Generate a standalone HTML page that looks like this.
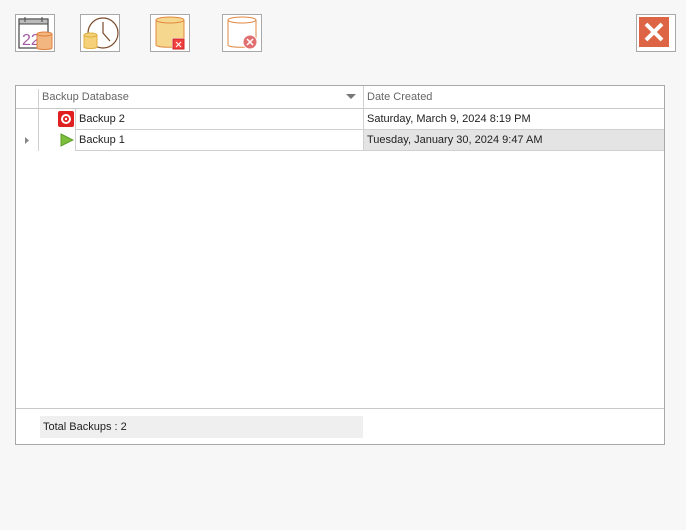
<!DOCTYPE html><html><head><style>
body{margin:0;width:686px;height:530px;background:#f7f7f7;font-family:"Liberation Sans",sans-serif;font-size:11px;color:#222;position:relative;overflow:hidden}
.a{position:absolute}
.btn{position:absolute;top:14px;width:38px;height:36px;border:1px solid #a8a8a8;background:#fff}
.grid{left:15px;top:85px;width:648px;height:358px;border:1px solid #a8a8a8;background:#fff}
</style></head><body>
<div class="btn" style="left:15px"><svg width="38" height="36"><rect x="3" y="4" width="29" height="29" fill="#fff" stroke="#444" stroke-width="1.2"/><rect x="3" y="4" width="29" height="5" fill="#bbb" stroke="#444" stroke-width="1"/><line x1="9" y1="2" x2="9" y2="7" stroke="#444"/><line x1="26" y1="2" x2="26" y2="7" stroke="#444"/><text x="6" y="30" font-size="16" fill="#a35aa6" font-family="Liberation Sans">22</text><path d="M21 19h15v14c0 2-15 2-15 0z" fill="#f2b680" stroke="#e08040"/><ellipse cx="28.5" cy="19" rx="7.5" ry="2" fill="#f2b680" stroke="#e08040"/></svg></div>
<div class="btn" style="left:80px"><svg width="38" height="36"><circle cx="22" cy="18" r="15" fill="#fff" stroke="#7a4a2a" stroke-width="1.2"/><path d="M22 7v11l7 8" fill="none" stroke="#7a4a2a" stroke-width="1.2"/><path d="M3 20h13v12c0 2-13 2-13 0z" fill="#f5d27a" stroke="#e0b040"/><ellipse cx="9.5" cy="20" rx="6.5" ry="2" fill="#f5d27a" stroke="#e0b040"/></svg></div>
<div class="btn" style="left:150px"><svg width="38" height="36"><path d="M5 5h28v25c0 3-28 3-28 0z" fill="#f5d78e" stroke="#e08840"/><ellipse cx="19" cy="5" rx="14" ry="3" fill="#f5d78e" stroke="#e08840"/><rect x="21" y="23" width="13" height="12" fill="#fff"/><rect x="22" y="24" width="11" height="10" fill="#f04040" stroke="#d02020"/><path d="M25 27l5 5M30 27l-5 5" stroke="#fff"/></svg></div>
<div class="btn" style="left:222px"><svg width="38" height="36"><path d="M5 5h28v25c0 3-28 3-28 0z" fill="#fff" stroke="#e08840"/><ellipse cx="19" cy="5" rx="14" ry="3" fill="#fff" stroke="#e08840"/><circle cx="27" cy="27" r="7" fill="#e07070" stroke="#fff"/><path d="M24 24l6 6M30 24l-6 6" stroke="#fff" stroke-width="1.5"/></svg></div>
<div class="a" style="left:636px;top:14px;width:36px;height:34px;border:1px solid #a8a8a8;background:#fff;padding:1px"><div style="margin:1px;width:30px;height:30px;background:#de6446;position:relative"><svg width="30" height="30"><path d="M7 7l16 16M23 7L7 23" stroke="#fff" stroke-width="4"/></svg></div></div>
<div class="a grid">
 <div class="a" style="left:0;top:0;width:648px;height:22px;border-bottom:1px solid #c8c8c8"></div>
 <div class="a" style="left:22px;top:3px;height:19px;border-left:1px solid #d0d0d0"></div>
 <div class="a" style="left:347px;top:0;height:22px;border-left:1px solid #d0d0d0"></div>
 <div class="a" style="left:26px;top:5px;color:#666">Backup Database</div>
 <div class="a" style="left:351px;top:5px;color:#666">Date Created</div>
 <svg class="a" style="left:330px;top:8px" width="11" height="6"><path d="M0 0h10L5 5z" fill="#777"/></svg>
 <div class="a" style="left:22px;top:23px;height:42px;border-left:1px solid #d0d0d0"></div>
 <div class="a" style="left:59px;top:43px;width:589px;border-top:1px solid #d0d0d0"></div>
 <div class="a" style="left:59px;top:64px;width:589px;border-top:1px solid #d0d0d0"></div>
 <div class="a" style="left:59px;top:23px;height:42px;border-left:1px solid #d0d0d0"></div>
 <div class="a" style="left:347px;top:23px;height:42px;border-left:1px solid #d0d0d0"></div>
 <div class="a" style="left:348px;top:44px;width:300px;height:20px;background:#e4e4e4"></div>
 <div class="a" style="left:42px;top:25px;width:16px;height:16px;background:#e02020;border-radius:2px"><svg width="16" height="16"><circle cx="8" cy="8" r="5" fill="#fff"/><circle cx="8" cy="8" r="3" fill="#e02020"/><circle cx="8" cy="8" r="1.2" fill="#fff"/></svg></div>
 <svg class="a" style="left:44px;top:47px" width="14" height="14"><path d="M1 1L13 7L1 13z" fill="#7bbf3c" stroke="#5e9e28"/></svg>
 <svg class="a" style="left:9px;top:51px" width="5" height="7"><path d="M0 0L4 3.5L0 7z" fill="#888"/></svg>
 <div class="a" style="left:63px;top:27px">Backup 2</div>
 <div class="a" style="left:63px;top:48px">Backup 1</div>
 <div class="a" style="left:351px;top:27px">Saturday, March 9, 2024 8:19 PM</div>
 <div class="a" style="left:351px;top:48px">Tuesday, January 30, 2024 9:47 AM</div>
 <div class="a" style="left:0;top:322px;width:648px;border-top:1px solid #c8c8c8"></div>
 <div class="a" style="left:24px;top:330px;width:323px;height:22px;background:#efefef"></div>
 <div class="a" style="left:27px;top:335px">Total Backups : 2</div>
</div>
</body></html>
